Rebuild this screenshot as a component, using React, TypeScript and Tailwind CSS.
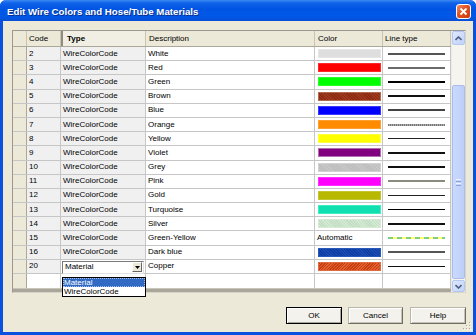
import React from 'react';

type Line = { c: string; h: number; kind?: 'solid' | 'dotted' | 'dash' };
type Row = { code: string; desc: string; color?: string; bd?: string; tex?: string; auto?: boolean; line: Line };

const rows: Row[] = [
  { code: '2', desc: 'White', color: '#dedede', bd: '#e6e6e6', line: { c: '#555', h: 2 } },
  { code: '3', desc: 'Red', color: '#ff0000', bd: '#ff2a2a', line: { c: '#6a6a6a', h: 2 } },
  { code: '4', desc: 'Green', color: '#00ff00', bd: '#2aff2a', line: { c: '#000', h: 1.5 } },
  { code: '5', desc: 'Brown', color: '#8a2a12', bd: '#b06a50', tex: 'repeating-linear-gradient(45deg,#8a2a12 0 1px,#a03a1e 1px 2px)', line: { c: '#111', h: 1.5 } },
  { code: '6', desc: 'Blue', color: '#0000ff', bd: '#3a3aff', line: { c: '#444', h: 2 } },
  { code: '7', desc: 'Orange', color: '#ff8c00', bd: '#ffa030', line: { c: '#888', h: 2, kind: 'dotted' } },
  { code: '8', desc: 'Yellow', color: '#ffff00', bd: '#ffff40', line: { c: '#222', h: 1 } },
  { code: '9', desc: 'Violet', color: '#800080', bd: '#b070b0', line: { c: '#111', h: 1.5 } },
  { code: '10', desc: 'Grey', color: '#c0c0c0', bd: '#d2d2d2', tex: 'repeating-linear-gradient(45deg,#bdbdbd 0 1px,#c8c8c8 1px 2px)', line: { c: '#111', h: 1.5 } },
  { code: '11', desc: 'Pink', color: '#ff00ff', bd: '#ff30ff', line: { c: '#8a8a80', h: 2 } },
  { code: '12', desc: 'Gold', color: '#b8b800', bd: '#c4c430', line: { c: '#222', h: 1.5 } },
  { code: '13', desc: 'Turquoise', color: '#10e0b0', bd: '#40eec4', line: { c: '#000', h: 1.5 } },
  { code: '14', desc: 'Silver', color: '#c6e2c6', bd: '#d6ead6', tex: 'repeating-linear-gradient(45deg,#c2dec2 0 1px,#d4ead4 1px 2px)', line: { c: '#111', h: 1.5 } },
  { code: '15', desc: 'Green-Yellow', auto: true, line: { c: '#80d080', h: 2, kind: 'dash' } },
  { code: '16', desc: 'Dark blue', color: '#1040a8', bd: '#2a58b8', tex: 'repeating-linear-gradient(45deg,#0e3ca0 0 1px,#1a4cb4 1px 2px)', line: { c: '#555', h: 2 } },
];

const copper = { color: '#c83c14', bd: '#e06a40', tex: 'repeating-linear-gradient(135deg,#c83c14 0 1px,#e0602e 1px 2px)' };

function Swatch({ color, bd, tex }: { color: string; bd?: string; tex?: string }) {
  return (
    <div
      className="ml-[3px] w-[63px] h-[9px] border"
      style={{ backgroundColor: color, backgroundImage: tex, borderColor: bd ?? color }}
    />
  );
}

function LineSample({ line }: { line: Line }) {
  if (line.kind === 'dash') {
    return (
      <div
        className="ml-[5px] w-[57px] h-[2px] bg-[repeating-linear-gradient(to_right,#7fcf7f_0_5px,#ffff70_5px_9px)]"
      />
    );
  }
  if (line.kind === 'dotted') {
    return (
      <div
        className="ml-[5px] w-[57px] h-[2px] bg-[repeating-linear-gradient(to_right,#777_0_1px,#aaa_1px_2px)]"
      />
    );
  }
  return <div className="ml-[5px] w-[57px]" style={{ height: line.h, backgroundColor: line.c }} />;
}

function Chevron({ up }: { up?: boolean }) {
  return (
    <svg width="7" height="5" viewBox="0 0 7 5">
      <path
        d={up ? 'M0.5 4 L3.5 1 L6.5 4' : 'M0.5 1 L3.5 4 L6.5 1'}
        fill="none"
        stroke="#4d6185"
        strokeWidth="1.6"
      />
    </svg>
  );
}

export default function App() {
  const cellBase = 'h-full flex items-center border-r border-[#c6c6c6] leading-none';
  return (
    <div className="w-[476px] h-[335px] bg-[#0a52dd] flex flex-col overflow-hidden rounded-t-[6px] font-['Liberation_Sans',Arial,sans-serif] text-black">
      {/* Title bar */}
      <div className="h-[21px] shrink-0 flex items-start pl-[7px] pr-[5px] bg-[linear-gradient(to_bottom,#3d8bf5_0px,#0f62e8_3px,#0054e3_9px,#0058e8_16px,#0a4fd6_21px)]">
        <span className="text-white font-bold text-[9.7px] leading-none mt-[7px] [text-shadow:1px_1px_0_#0a2f8a]">
          Edit Wire Colors and Hose/Tube Materials
        </span>
        <div className="ml-auto mt-[4px] w-[15px] h-[15px] rounded-[3px] border border-white bg-[linear-gradient(135deg,#f0906a,#e0501e_45%,#c83a10)] flex items-center justify-center">
          <svg width="9" height="9" viewBox="0 0 9 9">
            <path d="M1.5 1.5 L7.5 7.5 M7.5 1.5 L1.5 7.5" stroke="#fff" strokeWidth="1.8" />
          </svg>
        </div>
      </div>

      {/* Body */}
      <div className="relative flex-1 mx-[3px] mb-[3px] bg-[#ece9d8] flex flex-col pt-[9px] pl-[9px] pr-[7px]">
        {/* Grid */}
        <div className="relative w-[454px] h-[263px] border border-[#9a9890] border-b-[#d8d5c6] border-r-[#d8d5c6] flex bg-white text-[8px]">
          <div className="w-[438px] flex flex-col">
            {/* Header */}
            <div className="h-[16px] shrink-0 flex bg-[#ece9d8] border-b border-[#aca899]">
              <div className="w-[14px] h-full border-r border-[#c7c4b4]" />
              <div className="w-[34px] h-full border-r border-[#c7c4b4] flex items-center pl-[2px] leading-none">Code</div>
              <div className="w-[85px] h-full border-l-2 border-l-[#8f8d82] border-r border-[#c7c4b4] flex items-center pl-[4px] font-bold leading-none bg-[#f1efe4]">Type</div>
              <div className="w-[169px] h-full border-r border-[#c7c4b4] flex items-center pl-[3px] leading-none">Description</div>
              <div className="w-[68px] h-full border-r border-[#c7c4b4] flex items-center pl-[3px] leading-none">Color</div>
              <div className="w-[68px] h-full border-r border-[#c7c4b4] flex items-center pl-[2px] leading-none">Line type</div>
            </div>

            {/* Rows */}
            {rows.map((r) => (
              <div key={r.code} className="h-[14.2px] shrink-0 flex border-b border-[#c6c6c6]">
                <div className="w-[14px] h-full bg-[#ece9d8] border-r border-[#aca899]" />
                <div className={`w-[34px] pl-[2px] bg-[#f0f0f0] ${cellBase}`}>{r.code}</div>
                <div className={`w-[85px] pl-[2px] bg-[#f0f0f0] ${cellBase}`}>WireColorCode</div>
                <div className={`w-[169px] pl-[2px] ${cellBase}`}>{r.desc}</div>
                <div className={`w-[68px] ${cellBase}`}>
                  {r.auto ? <span className="pl-[2px]">Automatic</span> : <Swatch color={r.color!} bd={r.bd} tex={r.tex} />}
                </div>
                <div className={`w-[68px] ${cellBase}`}>
                  <LineSample line={r.line} />
                </div>
              </div>
            ))}

            {/* Row 20 with combo */}
            <div className="relative z-10 h-[14.2px] shrink-0 flex border-b border-[#c6c6c6]">
              <div className="w-[14px] h-full bg-[#ece9d8] border-r border-[#aca899]" />
              <div className={`w-[34px] pl-[2px] bg-[#f0f0f0] ${cellBase}`}>20</div>
              <div className="relative w-[85px] h-full border-r border-[#c6c6c6] bg-white">
                <div className="absolute left-[1px] top-[1px] w-[82px] h-[13px] border border-[#7a7a7a] border-b-[#e0e0e0] border-r-[#e0e0e0] bg-white flex items-center">
                  <span className="pl-[2px] leading-none">Material</span>
                  <div className="ml-auto mr-[1px] w-[10px] h-[10px] bg-[#ece9d8] border border-white border-b-[#666] border-r-[#666] flex items-center justify-center">
                    <svg width="5" height="3" viewBox="0 0 5 3">
                      <path d="M0 0 H5 L2.5 3 Z" fill="#000" />
                    </svg>
                  </div>
                </div>
                {/* Dropdown list */}
                <div className="absolute left-[1px] top-[17px] w-[84px] h-[20px] border border-black bg-white flex flex-col leading-none">
                  <div className="h-[10px] bg-[#316ac5] text-white flex items-center pl-[1px] outline-1 outline-dotted outline-[#a8c0f0] -outline-offset-1">Material</div>
                  <div className="h-[9px] flex items-center pl-[1px]">WireColorCode</div>
                </div>
              </div>
              <div className={`w-[169px] pl-[2px] ${cellBase}`}>Copper</div>
              <div className={`w-[68px] ${cellBase}`}>
                <Swatch color={copper.color} bd={copper.bd} tex={copper.tex} />
              </div>
              <div className={`w-[68px] ${cellBase}`}>
                <LineSample line={{ c: '#111', h: 1.5 }} />
              </div>
            </div>

            {/* Empty new row */}
            <div className="h-[14px] shrink-0 flex">
              <div className="w-[14px] h-full bg-[#ece9d8] border-r border-[#aca899]" />
              <div className="w-[34px] h-full border-r border-[#c6c6c6]" />
              <div className="w-[85px] h-full border-r border-[#c6c6c6]" />
              <div className="w-[169px] h-full border-r border-[#c6c6c6]" />
              <div className="w-[68px] h-full border-r border-[#c6c6c6]" />
              <div className="w-[68px] h-full border-r border-[#c6c6c6]" />
            </div>
            <div className="flex-1 bg-[#a9a79b] border-t border-[#c9c6b8]" />
          </div>

          {/* Vertical scrollbar */}
          <div className="w-[14px] flex flex-col bg-[#f5f4ee] border-l border-[#eeede5]">
            <div className="h-[14px] shrink-0 rounded-[2px] border border-[#b4c6f2] bg-[linear-gradient(135deg,#dfe8fe,#c1d2fa)] flex items-center justify-center">
              <Chevron up />
            </div>
            <div className="flex-1 relative">
              <div className="absolute left-0 right-0 top-[40px] h-[194px] rounded-[2px] border border-[#a9bcec] bg-[linear-gradient(to_right,#cbd9fd,#bccff9)] flex flex-col items-center justify-center gap-[1px]">
                <div className="w-[5px] h-[1px] bg-[#eef3ff]" />
                <div className="w-[5px] h-[1px] bg-[#8ca4dc]" />
                <div className="w-[5px] h-[1px] bg-[#eef3ff]" />
                <div className="w-[5px] h-[1px] bg-[#8ca4dc]" />
              </div>
            </div>
            <div className="h-[12px] shrink-0 rounded-[2px] border border-[#b4c6f2] bg-[linear-gradient(135deg,#dfe8fe,#c1d2fa)] flex items-center justify-center">
              <Chevron />
            </div>
          </div>
        </div>

        {/* Buttons */}
        <div className="flex justify-end mt-[14px] text-[8px]">
          <button className="w-[56px] h-[17px] border border-black bg-[#f3f2ec] shadow-[inset_1px_1px_0_#ffffff,inset_-1px_-1px_0_#a9a79b] leading-none">
            OK
          </button>
          <button className="ml-[6px] w-[55px] h-[17px] border border-[#b8b6aa] border-b-[#6f6d64] border-r-[#6f6d64] bg-[#f3f2ec] shadow-[inset_1px_1px_0_#ffffff,inset_-1px_-1px_0_#c4c2b6] leading-none">
            Cancel
          </button>
          <button className="ml-[7px] w-[56px] h-[17px] border border-[#b8b6aa] border-b-[#6f6d64] border-r-[#6f6d64] bg-[#f3f2ec] shadow-[inset_1px_1px_0_#ffffff,inset_-1px_-1px_0_#c4c2b6] leading-none">
            Help
          </button>
        </div>

        {/* Resize grip */}
        <svg className="absolute right-[1px] bottom-[1px]" width="10" height="10" viewBox="0 0 10 10">
          {[
            [8, 2], [5, 5], [8, 5], [2, 8], [5, 8], [8, 8],
          ].map(([x, y], i) => (
            <g key={i}>
              <rect x={x} y={y} width="1" height="1" fill="#ffffff" />
              <rect x={x - 1} y={y - 1} width="1" height="1" fill="#aca899" />
            </g>
          ))}
        </svg>
      </div>
    </div>
  );
}
